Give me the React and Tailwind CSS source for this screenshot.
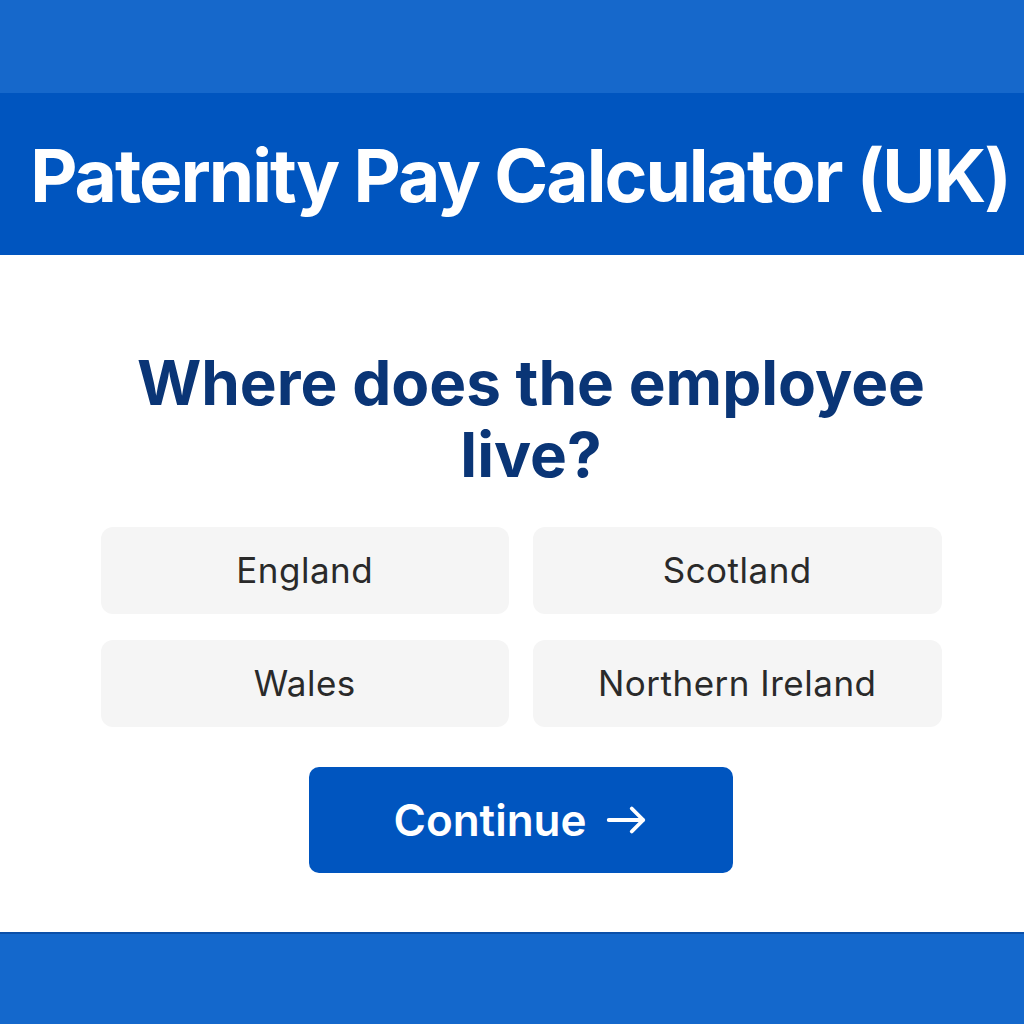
import React, { useState } from "react";

const regions = ["England", "Scotland", "Wales", "Northern Ireland"];

function App() {
  const [selected, setSelected] = useState(null);

  return (
    <div className="w-[1024px] h-[1024px] flex flex-col bg-white font-['Inter',sans-serif] overflow-hidden">
      {/* Top band */}
      <div className="h-[93px] bg-[#1668cb]"></div>

      {/* Header */}
      <header className="h-[162px] bg-[#0055bf] flex items-center justify-center pl-[16px] pt-[2px]">
        <h1 className="text-[73px] font-bold text-white leading-none tracking-[-2px] whitespace-nowrap">
          Paternity Pay Calculator (UK)
        </h1>
      </header>

      {/* Question */}
      <main className="flex-grow flex flex-col items-center pt-[92px] pl-[18px]">
        <h2 className="w-[820px] ml-[20px] text-center text-[62px] font-bold text-[#0a3576] leading-[72px]">
          Where does the employee live?
        </h2>

        <div className="grid grid-cols-2 gap-x-[24px] gap-y-[26px] mt-[36px] w-[841px]">
          {regions.map((name) => (
            <button
              key={name}
              onClick={() => setSelected(name)}
              className={
                "h-[87px] rounded-[12px] flex items-center justify-center text-[35px] text-[#2a2a2a] tracking-[0.5px] " +
                (selected === name ? "bg-[#e6eefa]" : "bg-[#f5f5f5]")
              }
            >
              {name}
            </button>
          ))}
        </div>

        <button className="mt-[40px] w-[424px] h-[106px] rounded-[10px] bg-[#0055bf] text-white text-[44px] font-semibold flex items-center justify-center gap-[16px]">
          <span>Continue</span>
          <svg className="w-[46px] h-[46px]" viewBox="0 0 24 24" fill="none" stroke="currentColor" strokeWidth={2} strokeLinecap="round" strokeLinejoin="round">
            <path d="M3 12h18M15 6l6 6-6 6" />
          </svg>
        </button>
      </main>

      {/* Footer band */}
      <footer className="h-[92px] bg-[#1468cc] border-t-2 border-[#0b4fa8]"></footer>
    </div>
  );
}

export default App;
